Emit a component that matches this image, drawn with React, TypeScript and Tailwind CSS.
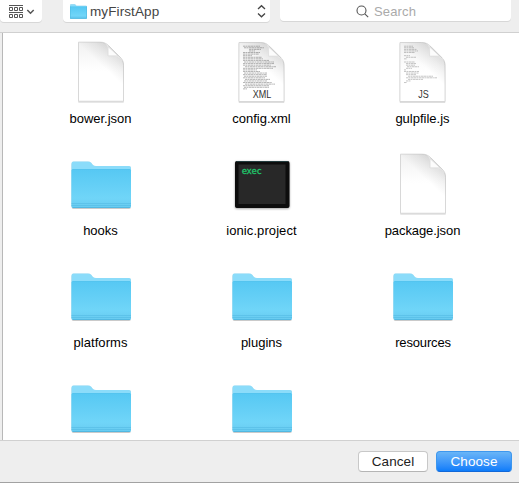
import React from "react";

type Kind = "doc" | "xml" | "js" | "folder" | "exec";

const items: { name: string; kind: Kind; spacing: string }[] = [
  { name: "bower.json", kind: "doc", spacing: "tracking-normal" },
  { name: "config.xml", kind: "xml", spacing: "tracking-normal" },
  { name: "gulpfile.js", kind: "js", spacing: "tracking-normal" },
  { name: "hooks", kind: "folder", spacing: "tracking-normal" },
  { name: "ionic.project", kind: "exec", spacing: "tracking-[0.08px]" },
  { name: "package.json", kind: "doc", spacing: "tracking-[-0.08px]" },
  { name: "platforms", kind: "folder", spacing: "tracking-[0.05px]" },
  { name: "plugins", kind: "folder", spacing: "tracking-normal" },
  { name: "resources", kind: "folder", spacing: "pl-px tracking-[-0.15px]" },
  { name: "", kind: "folder", spacing: "" },
  { name: "", kind: "folder", spacing: "" },
];

const xmlLines = [
  [0, 17], [1, 20], [6, 12], [6, 6], [0, 17], [0, 16], [0, 9], [0, 19], [0, 20], [0, 26],
  [1, 30], [0, 31], [0, 28], [2, 31], [0, 30], [0, 14], [0, 17], [1, 23], [0, 24], [1, 23],
  [0, 22], [2, 25], [1, 23], [0, 29], [2, 30], [0, 26], [1, 25], [0, 4],
];
const jsLines = [
  [0, 9], [0, 10], [0, 13], [0, 14], [0, 11], [0, 0], [0, 6], [2, 10], [0, 3], [0, 0],
  [0, 11], [2, 10], [2, 9], [3, 12], [2, 6], [0, 2], [0, 15], [2, 13], [2, 10], [4, 25],
  [2, 31], [4, 15], [2, 5], [0, 3],
];

const pagePath = "M9 2H30.500C34.500 2 37 3.300 39.500 5.800L50.500 16.800C53 19.300 54 21.500 54 25V61H9Z";

function Doc({ kind }: { kind: Kind }) {
  const plain = kind === "doc";
  const lines = kind === "xml" ? xmlLines : kind === "js" ? jsLines : [];
  return (
    <svg width="64" height="64" viewBox="0 0 64 64" className="overflow-visible">
      <defs>
        <linearGradient id="paper" x1="0" y1="0" x2="0" y2="1">
          <stop offset="0" stopColor="#f1f1f1" />
          <stop offset=".3" stopColor="#fafafa" />
          <stop offset=".5" stopColor="#ffffff" />
        </linearGradient>
        <linearGradient id="shade" x1="48" y1="12" x2="34" y2="27" gradientUnits="userSpaceOnUse">
          <stop offset="0" stopColor="#000" stopOpacity=".12" />
          <stop offset=".45" stopColor="#000" stopOpacity=".06" />
          <stop offset="1" stopColor="#000" stopOpacity="0" />
        </linearGradient>
        <filter id="docShadow" x="-20%" y="-20%" width="140%" height="140%">
          <feDropShadow dx="0" dy=".5" stdDeviation=".6" floodOpacity=".3" />
        </filter>
      </defs>
      <g transform={plain ? "translate(.5 .2)" : "translate(0 .5)"}>
        <path d={pagePath} fill="url(#paper)" stroke="#d0d0d0" strokeWidth=".7" filter="url(#docShadow)" />
        <path d={pagePath} fill="url(#shade)" />
        <g opacity={kind === "xml" ? ".55" : ".42"}>
          {lines.map(([x, w], i) => (
            <path key={i} d={`M${13 + x} ${5.7 + i * 1.58}h${w}`} stroke="#555" strokeWidth=".8" strokeDasharray="2.3 .4 1.4 .5 3 .3" />
          ))}
        </g>
        <path d="M34.500 2.500C38 4 38.600 7 38.600 15.600C46 15.600 51 17 53.500 21.500C53 19.500 52 18.300 50.500 16.800L39.500 5.800C38 4.300 36.500 3 34.500 2.500Z" fill="#e8e8e8" />
        <path d="M38.600 6.500V15.600H48.500Z" fill="#fcfcfc" stroke="#d6d6d6" strokeWidth=".6" />
        <path d="M39 5.500L51 17.500" stroke="#d0d0d0" strokeWidth="1" />
        {!plain && (
          <text x={kind === "xml" ? 32 : 32.5} y="57.300" textAnchor="middle" textLength={kind === "xml" ? 18.5 : 10.5} lengthAdjust="spacingAndGlyphs" fontFamily="Liberation Sans, sans-serif" fontSize="10.500" fill="#333">
            {kind === "xml" ? "XML" : "JS"}
          </text>
        )}
      </g>
    </svg>
  );
}

function Folder({ small = false }: { small?: boolean }) {
  return (
    <svg width={small ? 17 : 64} height={small ? 15 : 64} viewBox={small ? "2 8.5 61 49" : "0 0 64 64"} preserveAspectRatio="none">
      <defs>
        <linearGradient id="blue" x1="0" y1="0" x2="0" y2="1">
          <stop offset="0" stopColor="#56c8f3" />
          <stop offset=".75" stopColor="#70d5f8" />
          <stop offset="1" stopColor="#68cbf0" />
        </linearGradient>
        <filter id="folderShadow" x="-10%" y="-10%" width="120%" height="125%">
          <feDropShadow dx="0" dy=".6" stdDeviation=".6" floodOpacity=".35" />
        </filter>
      </defs>
      <path d="M4.500 9.500H19Q21 9.500 22.200 10.800L24 13Q25 14 27 14H60Q62 14 62 16V54Q62 56 60 56H4.500Q2.500 56 2.500 54V11.500Q2.500 9.500 4.500 9.500Z" fill="#8bdcfa" filter="url(#folderShadow)" />
      <path d="M4 17H60.500Q62 17 62 18.500V54Q62 56 60 56H4.500Q2.500 56 2.500 54V18.500Q2.500 17 4 17Z" fill="url(#blue)" />
      <path d="M3.500 17.500H61" stroke="#53c3ee" strokeWidth=".8" />
      <path d="M2.500 51.500H62M2.500 53.500H62" stroke="#4fb5df" strokeWidth=".7" opacity=".7" />
      <path d="M3.500 55.500H61" stroke="#48aeda" strokeWidth=".8" opacity=".85" />
      {small && <path d="M3 16V55.500H61.500V16" fill="none" stroke="#45b3dc" strokeWidth="2" />}
    </svg>
  );
}

function Exec() {
  return (
    <svg width="64" height="64" viewBox="0 0 64 64">
      <defs>
        <filter id="execShadow" x="-15%" y="-15%" width="130%" height="135%">
          <feDropShadow dx="0" dy=".8" stdDeviation="1" floodOpacity=".4" />
        </filter>
      </defs>
      <rect x="5" y="9" width="54.500" height="47" rx="2" fill="#080808" filter="url(#execShadow)" />
      <path d="M6.500 9.500H58" stroke="#29474a" strokeWidth=".8" />
      <rect x="8.500" y="12.500" width="47" height="39.500" fill="#282828" />
      <text x="11.700" y="21.500" textLength="20" fontFamily="DejaVu Sans Mono, monospace" fontSize="8.800" fill="#20c66b" stroke="#20c66b" strokeWidth=".3">exec</text>
    </svg>
  );
}

export default function App() {
  return (
    <main className="flex h-[483px] w-[519px] flex-col overflow-hidden border-b border-[#a2a2a2] bg-[#eeeeee] font-['Liberation_Sans',Arial,sans-serif]">
      <header className="flex h-[33px] shrink-0 items-start border-b border-[#d0d0d0]">
        <div className="flex h-[22px] w-[42px] items-center rounded-b-[4px] bg-white pl-2 shadow-[0_1px_0_#d7d7d7]">
          <svg width="30" height="16" viewBox="0 0 30 16" fill="none" stroke="#555">
            <path d="M1 2.500H15M1 9.500H15" strokeWidth="1" />
            <path d="M1.500 4.500h3v3h-3zM6.500 4.500h3v3h-3zM11.500 4.500h3v3h-3zM1.500 11.500h3v3h-3zM6.500 11.500h3v3h-3zM11.500 11.500h3v3h-3z" />
            <path d="M19.300 7L22.500 10.200L25.700 7" strokeWidth="1.500" />
          </svg>
        </div>
        <div className="ml-[21px] flex h-[22px] w-[207px] items-center rounded-b-[4px] bg-white pl-[7px] pr-1 shadow-[0_1px_0_#d7d7d7]">
          <Folder small />
          <span className="ml-[3px] flex-1 pt-[2px] text-[13.5px] leading-[22px] tracking-[0.100px] text-[#444]">myFirstApp</span>
          <svg width="9" height="14" viewBox="0 0 9 14" fill="none" stroke="#444" strokeWidth="1.300">
            <path d="M1 5L4.500 1.700L8 5M1 9.500L4.500 12.800L8 9.500" />
          </svg>
        </div>
        <div className="ml-[10px] flex h-[21px] w-[231px] items-center rounded-b-[4px] bg-white pl-[76px] shadow-[0_1px_0_#d7d7d7]">
          <svg width="13" height="13" viewBox="0 0 13 13" fill="none" stroke="#555" strokeWidth="1.100" className="mt-[2px]">
            <circle cx="5.500" cy="5.500" r="4.500" />
            <path d="M8.800 8.800L12.200 12.200" />
          </svg>
          <span className="ml-[5px] mt-[2px] text-[13px] leading-[22px] tracking-[0.150px] text-[#aaa]">Search</span>
        </div>
      </header>
      <section className="ml-[2px] h-[407px] shrink-0 overflow-hidden border-l border-[#b8b8b8] bg-white pl-[17px]">
        <div className="grid auto-rows-[112px] grid-cols-[161px_161px_161px]">
          {items.map((item, i) => (
            <div key={i} className="flex flex-col items-center pt-[7px]">
              <div className="h-16 w-16">
                {item.kind === "folder" ? <Folder /> : item.kind === "exec" ? <Exec /> : <Doc kind={item.kind} />}
              </div>
              <span className={`mt-[5px] text-[13px] leading-[20px] text-black ${item.spacing}`}>{item.name}</span>
            </div>
          ))}
        </div>
      </section>
      <footer className="flex flex-1 items-start justify-end gap-2 border-t border-[#d0d0d0] pr-[7px] pt-[10px] text-[13.5px]">
        <button className="h-[21px] w-[70px] rounded-[4px] border border-[#c8c8c8] border-b-[#b5b5b5] bg-white leading-[19px] tracking-[0.100px] text-[#222]">Cancel</button>
        <button className="h-[21px] w-[76px] rounded-[4px] border border-[#3d97ee] border-b-[#1268d8] bg-linear-to-b from-[#69b5f7] to-[#0a7cfa] leading-[19px] tracking-[0.100px] text-white">Choose</button>
      </footer>
    </main>
  );
}
